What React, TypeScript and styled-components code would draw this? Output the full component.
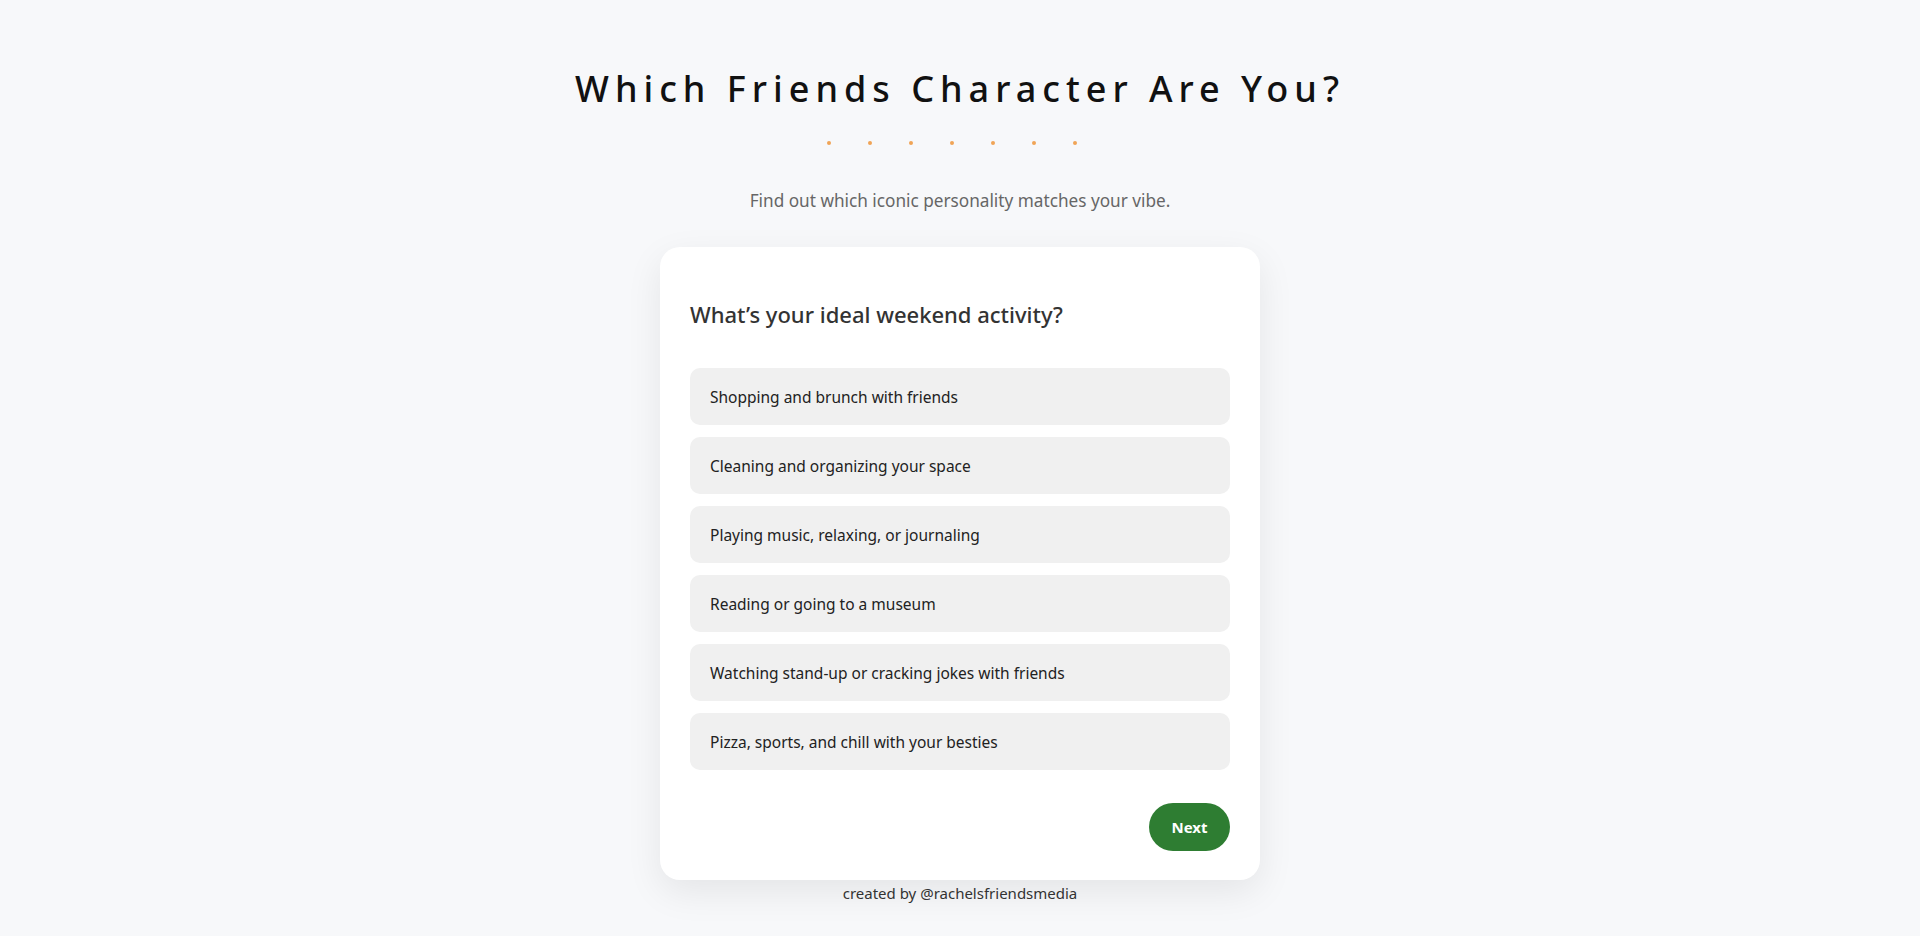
import { createGlobalStyle } from 'styled-components'
import styled from 'styled-components'

const GlobalStyle = createGlobalStyle`
  html, body {
    margin: 0;
    padding: 0;
    background: #f7f8fa;
  }
  body {
    font-family: 'Noto Sans', 'Open Sans', sans-serif;
    color: #333;
  }
`

const options = [
  'Shopping and brunch with friends',
  'Cleaning and organizing your space',
  'Playing music, relaxing, or journaling',
  'Reading or going to a museum',
  'Watching stand-up or cracking jokes with friends',
  'Pizza, sports, and chill with your besties',
]

const App = () => {
  return (
    <Page>
      <GlobalStyle />
      <Title>Which Friends Character Are You?</Title>
      <Dots>
        {Array.from({ length: 7 }).map((_, i) => (
          <Dot key={i} />
        ))}
      </Dots>
      <Subtitle>Find out which iconic personality matches your vibe.</Subtitle>
      <Card>
        <Question>What’s your ideal weekend activity?</Question>
        <OptionList>
          {options.map((text) => (
            <Option key={text}>{text}</Option>
          ))}
        </OptionList>
        <Actions>
          <NextButton>Next</NextButton>
        </Actions>
      </Card>
      <Footer>created by @rachelsfriendsmedia</Footer>
    </Page>
  )
}

export default App

const Page = styled.div`
  min-height: 936px;
  box-sizing: border-box;
  padding-top: 65px;
  display: flex;
  flex-direction: column;
  align-items: center;
`

const Title = styled.h1`
  margin: 0;
  font-size: 36px;
  font-weight: 500;
  letter-spacing: 6px;
  line-height: 48px;
  color: #111;
`

// dots sit a touch left of centre in the reference
const Dots = styled.div`
  display: flex;
  gap: 37px;
  margin-top: 28px;
  padding-right: 17px;
`

const Dot = styled.span`
  width: 4px;
  height: 4px;
  border-radius: 50%;
  background: #f0a456;
`

const Subtitle = styled.p`
  margin: 44px 0 0;
  font-size: 17.2px;
  line-height: 24px;
  color: #666;
`

const Card = styled.div`
  margin-top: 34px;
  width: 600px;
  box-sizing: border-box;
  padding: 52px 30px 29px;
  background: #fff;
  border-radius: 20px;
  box-shadow: 0 12px 36px rgba(0, 0, 0, 0.08);
`

const Question = styled.h2`
  margin: 0;
  font-size: 22px;
  font-weight: 500;
  line-height: 30px;
  color: #333;
`

const OptionList = styled.div`
  display: flex;
  flex-direction: column;
  gap: 12px;
  margin-top: 39px;
`

const Option = styled.button`
  height: 57px;
  padding: 0 20px;
  border: none;
  border-radius: 10px;
  background: #f0f0f0;
  text-align: left;
  font-family: inherit;
  font-size: 15.5px;
  color: #222;
  cursor: pointer;
`

const Actions = styled.div`
  display: flex;
  justify-content: flex-end;
  margin-top: 33px;
`

const NextButton = styled.button`
  width: 81px;
  height: 48px;
  border: none;
  border-radius: 24px;
  background: #2e7d32;
  color: #fff;
  font-family: inherit;
  font-size: 15px;
  font-weight: 700;
  cursor: pointer;
`

const Footer = styled.div`
  margin-top: 2px;
  font-size: 15px;
  line-height: 22px;
  color: #333;
`
